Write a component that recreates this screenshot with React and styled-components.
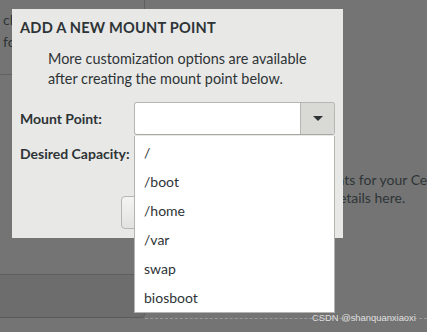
import React from 'react';
import styled, { createGlobalStyle } from 'styled-components';

const Global = createGlobalStyle`
  html, body { margin: 0; padding: 0; background: #747474; }
  body { font-family: Lato, "Noto Sans", sans-serif; color: #2e3436; }
  * { box-sizing: border-box; }
`;

const Screen = styled.div`
  position: relative;
  width: 427px;
  height: 332px;
  overflow: hidden;
  background: #747474;
  display: flex;
`;

const LeftPanel = styled.div`
  width: 145px;
  flex: none;
  display: flex;
  flex-direction: column;
`;

const HintArea = styled.div`
  height: 75px;
  padding: 9px 0 0 3px;
  border-bottom: 1px solid #626262;
  border-right: 1px solid #5f5f5f;
  font-size: 14px;
  line-height: 22px;
  white-space: nowrap;
  overflow: hidden;
`;

const Filler = styled.div`
  flex: 1;
  border-right: 1px solid #5f5f5f;
`;

const SelectorBox = styled.div`
  height: 44px;
  background: #6d6d6d;
  border-top: 1px solid #5e5e5e;
  border-bottom: 1px solid #5a5a5a;
  border-right: 1px solid #5e5e5e;
  border-bottom-right-radius: 4px;
`;

const LeftBottom = styled.div`
  height: 14px;
`;

const RightPanel = styled.div`
  flex: 1;
  display: flex;
  flex-direction: column;
  overflow: hidden;
`;

const Message = styled.div`
  padding-top: 171px;
  font-size: 14px;
  line-height: 18px;
  color: #2e3436;
  height: 318px;
`;

const MessageLine = styled.div`
  white-space: nowrap;
  margin-left: ${(p) => p.$offset}px;
`;

const DashedRule = styled.div`
  border-top: 1px dashed #9a9a9a;
`;

const Dialog = styled.div`
  position: absolute;
  left: 12px;
  top: 9px;
  width: 331px;
  height: 229px;
  background: #e8e8e7;
  padding: 9px 8px 0 8px;
  display: flex;
  flex-direction: column;
`;

const Title = styled.div`
  font-size: 14.6px;
  font-weight: 700;
  line-height: 20px;
  text-transform: uppercase;
  letter-spacing: 0.2px;
`;

const Intro = styled.div`
  margin-top: 11px;
  padding-left: 28px;
  font-size: 14.4px;
  line-height: 20px;
`;

const Form = styled.div`
  margin-top: 13px;
  display: grid;
  grid-template-columns: 108px 201px;
  column-gap: 6px;
  row-gap: 2px;
  grid-auto-rows: 33px;
  align-items: center;
`;

const Label = styled.div`
  font-size: 14px;
  font-weight: 700;
  white-space: nowrap;
`;

const Combo = styled.div`
  height: 33px;
  display: flex;
  background: #fff;
  border: 1px solid #b6b6b3;
  border-bottom-color: #a8a8a4;
  border-radius: 3px;
  overflow: hidden;
`;

const ComboField = styled.div`
  flex: 1;
`;

const ComboButton = styled.div`
  width: 34px;
  flex: none;
  background: #d9d9d6;
  border-left: 1px solid #b6b6b3;
  display: flex;
  align-items: center;
  justify-content: center;
`;

const Caret = styled.div`
  width: 0;
  height: 0;
  border-left: 5px solid transparent;
  border-right: 5px solid transparent;
  border-top: 5px solid #2e3436;
`;

const Entry = styled.div`
  height: 33px;
  background: #fff;
  border: 1px solid #b6b6b3;
  border-radius: 3px;
`;

const ButtonRow = styled.div`
  margin-top: 26px;
  padding-left: 101px;
  display: flex;
  gap: 8px;
`;

const Button = styled.div`
  height: 33px;
  padding: 0 20px;
  display: flex;
  align-items: center;
  font-size: 14px;
  border: 1px solid #b6b6b3;
  border-radius: 4px;
  background: linear-gradient(#f4f4f2, #e2e2df);
`;

const Popup = styled.div`
  position: absolute;
  left: 134px;
  top: 136px;
  width: 201px;
  height: 177px;
  background: #fff;
  border: 1px solid #b3b3b0;
  border-top: none;
  padding-top: 2px;
`;

const Item = styled.div`
  height: 29px;
  padding-left: 9px;
  display: flex;
  align-items: center;
  font-size: 14px;
  color: #2e3436;
`;

const Watermark = styled.div`
  position: absolute;
  left: 312px;
  top: 311px;
  font-family: "Liberation Sans", Arial, sans-serif;
  font-size: 9.4px;
  line-height: 13px;
  color: #e2e2e2;
  text-shadow: 0 0 1px #666;
  white-space: nowrap;
`;

const options = ['/', '/boot', '/home', '/var', 'swap', 'biosboot'];

export default function App() {
  return (
    <>
      <Global />
      <Screen>
        <LeftPanel>
          <HintArea>
            <div>click here to create them automatically.</div>
            <div>for your installation.</div>
          </HintArea>
          <Filler />
          <SelectorBox />
          <LeftBottom />
        </LeftPanel>
        <RightPanel>
          <Message>
            <MessageLine $offset={20}>When you create mount points for your CentOS Linux 7 installation,</MessageLine>
            <MessageLine $offset={22}>you'll be able to view their details here.</MessageLine>
          </Message>
          <DashedRule />
        </RightPanel>

        <Dialog>
          <Title>Add a new mount point</Title>
          <Intro>
            More customization options are available
            <br />
            after creating the mount point below.
          </Intro>
          <Form>
            <Label>Mount Point:</Label>
            <Combo>
              <ComboField />
              <ComboButton>
                <Caret />
              </ComboButton>
            </Combo>
            <Label>Desired Capacity:</Label>
            <Entry />
          </Form>
          <ButtonRow>
            <Button>Cancel</Button>
            <Button>Add mount point</Button>
          </ButtonRow>
        </Dialog>

        <Popup>
          {options.map((o) => (
            <Item key={o}>{o}</Item>
          ))}
        </Popup>

        <Watermark>CSDN @shanquanxiaoxi</Watermark>
      </Screen>
    </>
  );
}
